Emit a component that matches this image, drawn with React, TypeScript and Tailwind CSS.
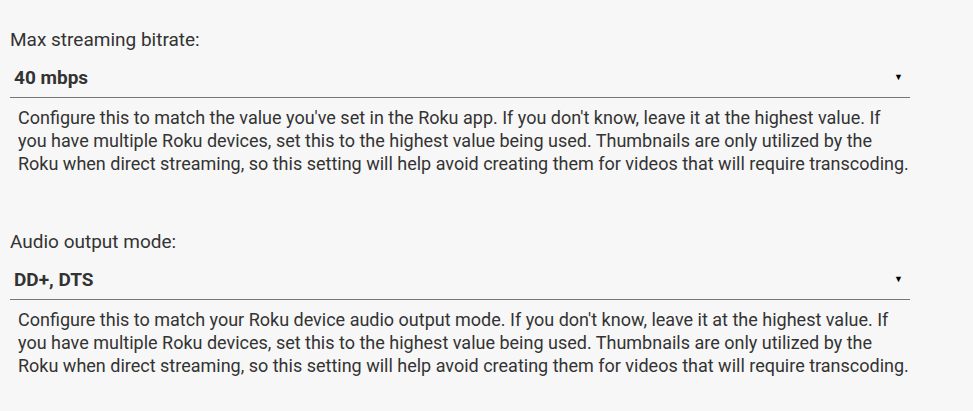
import React from "react"

const desc =
  "so this setting will help avoid creating them for videos that will require transcoding."

function Setting({ label, value, text }: { label: string; value: string; text: string }) {
  return (
    <div className="w-[900px] mb-[27px]">
      <div className="text-[19px] text-[#333] leading-[24px] pt-[28px]">{label}</div>
      <div className="relative flex items-center h-[38px] mt-[8px] border-b border-[#777] pl-[4px]">
        <span className="text-[19px] font-bold text-[#333]">{value}</span>
        <span className="absolute right-[7px] top-[11px] text-[9px] text-black">▼</span>
      </div>
      <p className="w-[902px] text-[18px] leading-[23px] text-[#333] pl-[8px] pt-[8px]">{text}</p>
    </div>
  )
}

export default function App() {
  return (
    <div className="min-h-screen bg-[#f7f7f7] pl-[10px] font-['Roboto',sans-serif]">
      <Setting
        label="Max streaming bitrate:"
        value="40 mbps"
        text={
          "Configure this to match the value you've set in the Roku app. If you don't know, leave it at the highest value. If you have multiple Roku devices, set this to the highest value being used. Thumbnails are only utilized by the Roku when direct streaming, " +
          desc
        }
      />
      <Setting
        label="Audio output mode:"
        value="DD+, DTS"
        text={
          "Configure this to match your Roku device audio output mode. If you don't know, leave it at the highest value. If you have multiple Roku devices, set this to the highest value being used. Thumbnails are only utilized by the Roku when direct streaming, " +
          desc
        }
      />
    </div>
  )
}
